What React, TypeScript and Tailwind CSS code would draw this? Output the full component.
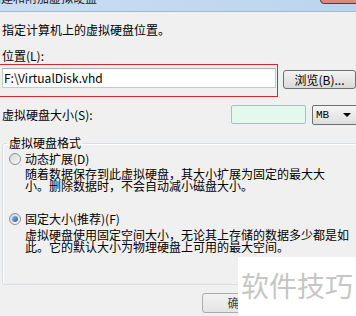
import React from 'react'

function Radio({ checked }: { checked?: boolean }) {
  return (
    <span className="w-[12px] h-[12px] shrink-0 rounded-full border border-[#8e8f8f] bg-gradient-to-br from-[#d4d4d4] to-[#fbfbfb] flex items-center justify-center">
      {checked && (
        <span className="w-[6px] h-[6px] rounded-full bg-gradient-to-br from-[#8cc4f4] to-[#1d55a8]" />
      )}
    </span>
  )
}

export default function App() {
  return (
    <div className="relative w-[356px] h-[316px] overflow-hidden bg-[#f0f0f0] text-[12px] leading-[12px] text-black font-['Noto_Sans_CJK_SC','Microsoft_YaHei',sans-serif]">
      {/* title bar */}
      <div className="relative h-[12px] overflow-hidden border-b border-[#a5b8cc] bg-gradient-to-r from-[#c9def2] to-[#b9d5ee]">
        <div className="-mt-[8px] -ml-[11px] text-[12px] leading-[12px] text-[#222] whitespace-nowrap">创建和附加虚拟硬盘</div>
        <div className="absolute -top-[10px] right-[-6px] w-[42px] h-[14px] rounded-[4px] border border-[#7a2f26] bg-[#d98a78]" />
      </div>

      <div className="pl-[2px]">
        <p className="mt-[12px] whitespace-nowrap">指定计算机上的虚拟硬盘位置。</p>
        <p className="mt-[14px] whitespace-nowrap">位置(L):</p>

        <div className="mt-[2px] flex items-start">
          <div className="-ml-[3px] w-[279px] h-[33px] shrink-0 border border-[#d42a2a] pt-[3px] pl-[2px]">
            <div className="w-[274px] h-[20px] bg-white border border-[#c6c9ce] border-t-[#a9adb4] flex items-center pl-[1px] whitespace-nowrap">
              F:\VirtualDisk.vhd
            </div>
          </div>
          <button className="ml-[5px] mt-[6px] w-[73px] h-[19px] shrink-0 rounded-[3px] border border-[#707070] bg-gradient-to-b from-[#f4f4f4] to-[#d9d9d9] text-[12px] leading-[12px] text-black whitespace-nowrap">
            浏览(B)...
          </button>
        </div>

        <div className="mt-[7px] w-[358px] h-[21px] flex items-center">
          <span className="flex-1 whitespace-nowrap">虚拟硬盘大小(S):</span>
          <div className="w-[75px] h-[19px] shrink-0 rounded-[2px] border border-[#a7bccd] bg-[#e3f9ec]" />
          <div className="ml-[6px] w-[48px] h-[20px] shrink-0 rounded-[2px] border border-[#707070] bg-gradient-to-b from-[#f6f6f6] to-[#dedede] flex items-center pl-[3px]">
            <span className="font-['Liberation_Mono',monospace] text-[11px]">MB</span>
            <span className="ml-[14px] w-0 h-0 border-l-[4px] border-r-[4px] border-t-[4px] border-l-transparent border-r-transparent border-t-black" />
          </div>
        </div>

        <fieldset className="mt-[12px] w-[372px] rounded-[3px] border border-[#d5dfe5] shadow-[inset_1px_1px_0_#ffffff] pb-[31px]">
          <legend className="ml-[4px] px-[2px] leading-[12px] whitespace-nowrap">虚拟硬盘格式</legend>

          <div className="mt-[4px] pl-[6px] flex items-center gap-[4px]">
            <Radio />
            <span className="whitespace-nowrap">动态扩展(D)</span>
          </div>
          <p className="mt-[3px] pl-[22px] whitespace-nowrap">
            随着数据保存到此虚拟硬盘，其大小扩展为固定的最大大
            <br />
            小。删除数据时，不会自动减小磁盘大小。
          </p>

          <div className="mt-[21px] pl-[6px] flex items-center gap-[4px]">
            <Radio checked />
            <span className="whitespace-nowrap">固定大小(推荐)(F)</span>
          </div>
          <p className="mt-[4px] pl-[22px] whitespace-nowrap">
            虚拟硬盘使用固定空间大小，无论其上存储的数据多少都是如
            <br />
            此。它的默认大小为物理硬盘上可用的最大空间。
          </p>
        </fieldset>

        <button className="mt-[8px] ml-[200px] w-[75px] h-[20px] rounded-[3px] border border-[#acacac] bg-gradient-to-b from-[#f2f2f2] to-[#e4e4e4] text-[12px] leading-[12px] text-[#444] whitespace-nowrap">
          确定
        </button>
      </div>

      {/* watermark */}
      <div className="absolute left-[238px] top-[257px] right-0 bottom-0 bg-white pl-[3px] pt-[14px]">
        <span className="text-[28px] leading-[28px] text-[#c6c6c6] whitespace-nowrap">软件技巧</span>
      </div>
    </div>
  )
}
